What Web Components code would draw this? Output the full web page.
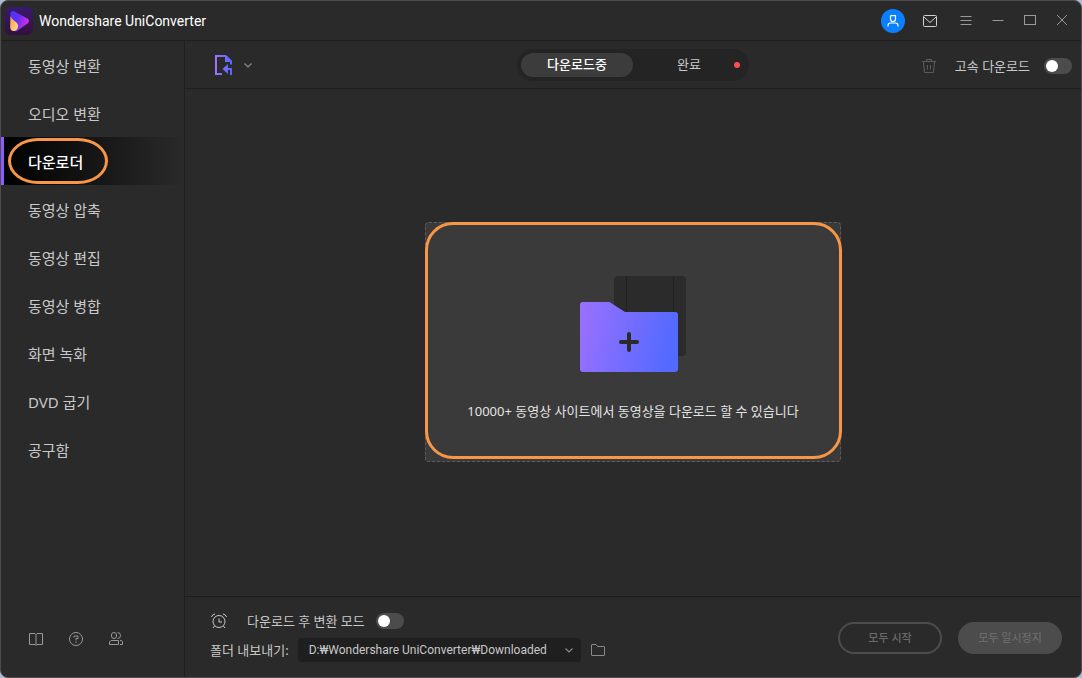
<!DOCTYPE html>
<html lang="ko">
<head>
<meta charset="utf-8">
<meta name="viewport" content="width=device-width, initial-scale=1">
<title>Wondershare UniConverter</title>
<style>
  html { height: 100%; background: #a9bcd3; }
  body {
    margin: 0; min-height: 100%; display: grid;
    font: 13px/20px "Noto Sans", "Noto Sans CJK KR", sans-serif;
    color: #c8c8c8;
    --bg: #2a2a2a; --line: #1e1e1e; --mark: #f79646; --accent: #8b5cff;
    --latin: Roboto, "Noto Sans CJK KR", sans-serif;
  }
</style>
</head>
<body>
<uc-window>
  <uc-titlebar slot="title">Wondershare UniConverter</uc-titlebar>
  <uc-sidebar slot="side">
    <uc-nav-item>동영상 변환</uc-nav-item>
    <uc-nav-item>오디오 변환</uc-nav-item>
    <uc-nav-item active>다운로더</uc-nav-item>
    <uc-nav-item>동영상 압축</uc-nav-item>
    <uc-nav-item>동영상 편집</uc-nav-item>
    <uc-nav-item>동영상 병합</uc-nav-item>
    <uc-nav-item>화면 녹화</uc-nav-item>
    <uc-nav-item>DVD 굽기</uc-nav-item>
    <uc-nav-item>공구함</uc-nav-item>
  </uc-sidebar>
  <uc-toolbar slot="tools"></uc-toolbar>
  <uc-dropzone slot="content">10000+ 동영상 사이트에서 동영상을 다운로드 할 수 있습니다</uc-dropzone>
  <uc-footer slot="footer"></uc-footer>
</uc-window>

<script>
const base = `
  *, *::before, *::after { box-sizing: border-box; }
  svg { display: block; fill: none; stroke: currentColor; }
  button { font: inherit; color: inherit; background: none; border: 0; padding: 0; margin: 0; cursor: pointer; }
`;

function define(name, css, html, setup) {
  const template = document.createElement('template');
  template.innerHTML = `<style>${base}${css}</style>${html}`;
  customElements.define(name, class extends HTMLElement {
    constructor() {
      super();
      this.attachShadow({ mode: 'open' }).append(template.content.cloneNode(true));
    }
    connectedCallback() { if (setup) setup(this, this.shadowRoot); }
  });
}

define('uc-window', `
  :host {
    display: grid; background: var(--bg);
    border: 1px solid #4c4c4c; border-radius: 8px; overflow: hidden;
    grid-template: "title title" 40px "side main" 1fr / 184px minmax(0, 1fr);
  }
  header { grid-area: title; border-bottom: 1px solid var(--line); display: grid; }
  aside { grid-area: side; border-right: 1px solid var(--line); display: grid; }
  main { grid-area: main; display: grid; grid-template-rows: 48px 1fr auto; }
  .tools { border-bottom: 1px solid var(--line); display: grid; }
  .content { display: grid; place-items: center; padding-bottom: 2px; }
  .footer { border-top: 1px solid var(--line); }
`, `
  <header><slot name="title"></slot></header>
  <aside><slot name="side"></slot></aside>
  <main>
    <div class="tools"><slot name="tools"></slot></div>
    <div class="content"><slot name="content"></slot></div>
    <div class="footer"><slot name="footer"></slot></div>
  </main>
`);

define('uc-titlebar', `
  :host { display: flex; align-items: center; padding: 0 3px 0 4px; }
  .logo { width: 28px; height: 28px; margin-right: 6px; stroke: none; }
  .name { flex: 1; font: 14px/20px var(--latin); color: #fff; }
  .controls { display: flex; align-items: center; color: #9a9a9a; }
  button { width: 32px; height: 32px; display: grid; place-items: center; }
  .user { width: 24px; height: 24px; border-radius: 12px; background: #0a80ff; color: #fff; margin-right: 9px; }
  .mail { color: #d0d0d0; margin-right: 4px; }
`, `
  <svg class="logo" viewBox="0 0 28 28" aria-hidden="true">
    <defs>
      <linearGradient id="tile" x1="0" y1="0" x2="0" y2="1"><stop stop-color="#3a1a6e"/><stop offset="1" stop-color="#32103a"/></linearGradient>
      <linearGradient id="play" x1="0" y1="0" x2="1" y2="0.4"><stop stop-color="#4a35ff"/><stop offset=".5" stop-color="#6230f6"/><stop offset="1" stop-color="#d32de6"/></linearGradient>
      <linearGradient id="drop" x1="0" y1="0" x2="1" y2="1"><stop stop-color="#ff9c4a"/><stop offset="1" stop-color="#ffdf8a"/></linearGradient>
    </defs>
    <rect width="28" height="28" rx="6" fill="url(#tile)"/>
    <path d="M5.500 6.500Q5.500 3 9 4.200L22.500 11.500Q25.500 14 22.500 16.500L12 24Q7 25 5.500 21Z" fill="url(#play)"/>
    <path d="M5.500 9Q6.500 12 11.500 15.500Q14 18 12.700 21Q11.500 24.500 8 24Q5.300 23.300 5.200 20Z" fill="url(#drop)"/>
  </svg>
  <span class="name"><slot></slot></span>
  <div class="controls">
    <button class="user" aria-label="계정"><svg width="14" height="14" viewBox="0 0 14 14" stroke-width="1.2"><path d="M5 1.700H9.500V5A2.500 2.500 0 0 1 4.500 5V2.200Z"/><path d="M2 12.500V11.500Q2 9 4.500 9H9.500Q12 9 12 11.500V12.500"/></svg></button>
    <button class="mail" aria-label="메시지"><svg width="16" height="16" viewBox="0 0 16 16"><rect x="1.500" y="2.500" width="13" height="11" rx="1"/><path d="M2 4L8 9.500L14 4"/></svg></button>
    <button aria-label="메뉴"><svg width="16" height="16" viewBox="0 0 16 16"><path d="M2.500 3.500H13.500M2.500 7.500H13.500M2.500 11.500H13.500"/></svg></button>
    <button aria-label="최소화"><svg width="16" height="16" viewBox="0 0 16 16"><path d="M2.500 7.500H13.500"/></svg></button>
    <button aria-label="최대화"><svg width="16" height="16" viewBox="0 0 16 16"><rect x="2.500" y="2.500" width="11" height="9"/></svg></button>
    <button aria-label="닫기"><svg width="16" height="16" viewBox="0 0 16 16"><path d="M3 2L13 12M13 2L3 12"/></svg></button>
  </div>
`);

define('uc-sidebar', `
  :host { display: flex; flex-direction: column; justify-content: space-between; }
  nav { display: flex; flex-direction: column; }
  .links { display: flex; gap: 16px; padding: 0 23px 26px; color: #999; }
  button { width: 24px; height: 24px; display: grid; place-items: center; }
`, `
  <nav><slot></slot></nav>
  <div class="links">
    <button aria-label="사용 설명서"><svg width="16" height="16" viewBox="0 0 16 16"><path d="M8 3.500L7 2.500H1.500V13.500H7L8 14.500L9 13.500H14.500V2.500H9ZM8 3.500V14"/></svg></button>
    <button aria-label="도움말"><svg width="16" height="16" viewBox="0 0 16 16"><circle cx="8" cy="8" r="6.500"/><path d="M6 6.500V5H10V7.500H8V9.500M8 10.500V12"/></svg></button>
    <button aria-label="커뮤니티"><svg width="16" height="16" viewBox="0 0 16 16"><rect x="3.500" y="1.500" width="5" height="6" rx="2.500"/><path d="M9.500 1.500Q12.500 1.500 12.500 4.500T9.500 7.500M1.500 13.500V11L3 9.500H10.500V13.500ZM12 9.500H13.500L14.500 11V13.500H12"/></svg></button>
  </div>
`);

define('uc-nav-item', `
  :host { display: block; }
  a { position: relative; display: flex; align-items: center; height: 48px; padding: 2px 0 0 27px;
      font-size: 15px; line-height: 24px; color: inherit; text-decoration: none; }
  :host([active]) a { color: #fff; font-weight: 500; background: linear-gradient(90deg, #000, #2a2a2a); }
  :host([active]) a::before { content: ""; position: absolute; inset: 0 auto 0 0; width: 3px; background: var(--accent); }
  :host([active]) a::after { content: ""; position: absolute; left: 7px; top: 1px; width: 100px; height: 46px;
      border: 3px solid var(--mark); border-radius: 30px / 23px; }
`, `<a href="#"><slot></slot></a>`, (host, root) => {
  if (host.hasAttribute('active')) root.querySelector('a').setAttribute('aria-current', 'page');
});

const switchCss = `
  input[type=checkbox] { appearance: none; margin: 0; width: 28px; height: 16px; border-radius: 8px; background: #4c4c4c;
    display: flex; align-items: center; padding: 2px; flex: none; }
  input[type=checkbox]::before { content: ""; width: 12px; height: 12px; border-radius: 6px; background: #fff; }
  input[type=checkbox]:checked { background: var(--accent); justify-content: flex-end; }
`;

define('uc-toolbar', `${switchCss}
  :host { display: grid; grid-template-columns: 1fr auto 1fr; align-items: center; padding: 0 9px 0 29px; }
  .add { display: flex; align-items: center; gap: 9px; justify-self: start; color: #8a8a8a; }
  .tabs { display: flex; align-items: center; height: 32px; padding: 4px; border-radius: 16px; background: #242424; margin-right: 20px; }
  .tabs button { position: relative; width: 112px; height: 24px; border-radius: 12px; line-height: 20px; padding-bottom: 2px; }
  .tabs button[aria-selected=true] { background: #3c3c3c; color: #fff; font-weight: 500; }
  .dot { position: absolute; right: 5px; top: 9px; width: 6px; height: 6px; border-radius: 3px; background: #ff4d4f; }
  .right { display: flex; align-items: center; justify-self: end; padding-top: 2px; }
  .trash { color: #5c5c5c; margin-right: 18px; }
  label { margin-right: 14px; }
`, `
  <button class="add" aria-label="URL 붙여넣기">
    <svg width="20" height="24" viewBox="0 0 20 24" stroke-width="2">
      <defs><linearGradient id="g" gradientUnits="userSpaceOnUse" x1="1" y1="0" x2="18" y2="0"><stop stop-color="#a070ff"/><stop offset="1" stop-color="#5468ff"/></linearGradient></defs>
      <path stroke="url(#g)" d="M8 21H2V3H11.500L17 8.500V11.500"/>
      <path stroke="none" fill="url(#g)" d="M11 3H13L18 8V9H11Z"/>
      <path stroke="url(#g)" d="M10 16H17V22"/><path stroke="none" fill="url(#g)" d="M8.500 16L14 11V21Z"/>
    </svg>
    <svg width="10" height="10" viewBox="0 0 10 10" stroke-width="1.200"><path d="M1.500 3.500L5 7L8.500 3.500"/></svg>
  </button>
  <div class="tabs" role="tablist">
    <button role="tab" aria-selected="true">다운로드중</button>
    <button role="tab" aria-selected="false">완료<span class="dot"></span></button>
  </div>
  <div class="right">
    <button class="trash" aria-label="삭제"><svg width="16" height="16" viewBox="0 0 16 16"><path d="M1 3.500H15M5.500 3V1.500H10.500V3M2.500 4L3.500 14.500H12.500L13.500 4M6.500 7V11.500M9.500 7V11.500"/></svg></button>
    <label for="fast">고속 다운로드</label><input id="fast" type="checkbox" role="switch">
  </div>
`);

define('uc-dropzone', `
  :host { display: block; width: 416px; max-width: 100%; }
  svg { stroke: none; }
  button { position: relative; width: 100%; min-height: 240px; display: flex; flex-direction: column; align-items: center;
    padding: 53px 16px 39px; gap: 29px; background: #3a3a3a; border: 1px dashed #5c5c5c; border-radius: 4px; color: #e4e4e4; }
  button::after { content: ""; position: absolute; inset: -1px -2px 2px -1px; border: 3px solid var(--mark); border-radius: 28px; }
`, `
  <button>
    <svg width="106" height="96" viewBox="0 0 106 96" aria-hidden="true">
      <defs><linearGradient id="f" x1="0" y1="0" x2="1" y2="0.150"><stop stop-color="#9b70ff"/><stop offset="1" stop-color="#546aff"/></linearGradient></defs>
      <rect x="34" width="72" height="80" rx="4" fill="#2b2b2b"/>
      <path d="M46.500 0V80M93.500 0V80" stroke="#212121"/>
      <path d="M3 26H29Q30 26 31 27L45 36H95Q98 36 98 39V93Q98 96 95 96H3Q0 96 0 93V29Q0 26 3 26Z" fill="url(#f)"/>
      <path d="M49 58V74M41 66H57" stroke="#2a2a2a" stroke-width="4" stroke-linecap="round"/>
    </svg>
    <span><slot></slot></span>
  </button>
`);

define('uc-footer', `${switchCss}
  :host { display: flex; align-items: center; justify-content: space-between; padding: 12px 19px 15px 25px; }
  .row { display: flex; align-items: center; }
  .mode { height: 24px; }
  .mode svg { margin-right: 19px; }
  .mode label { margin-right: 11px; }
  .path { margin-top: 5px; }
  .path label { margin-right: 9px; }
  .field { display: grid; align-items: center; width: 283px; margin-right: 9px; color: #8a8a8a; }
  .field > * { grid-area: 1 / 1; }
  .field svg { justify-self: end; margin-right: 7px; pointer-events: none; }
  .open { color: #8a8a8a; }
  select { appearance: none; width: 100%; height: 24px; padding: 0 24px 0 11px; border: 0; border-radius: 4px;
    background: #1f1f1f; color: #c8c8c8; font: 12px/20px var(--latin); }
  .actions { display: flex; gap: 16px; padding-top: 4px; }
  .actions button { width: 104px; height: 32px; border-radius: 16px; border: 2px solid #4c4c4c; font-size: 11px; font-weight: 500; color: #6a6a6a; }
  .actions .fill { background: #4c4c4c; }
`, `
  <div>
    <div class="row mode">
      <svg width="18" height="18" viewBox="0 0 18 18"><circle cx="9" cy="9.500" r="6"/><path d="M9 6.500V10H12M1.500 5Q2 2.500 5 2M16.500 5Q16 2.500 13 2M4.500 14L3 16M13.500 14L15 16"/></svg>
      <label for="convert">다운로드 후 변환 모드</label><input id="convert" type="checkbox" role="switch">
    </div>
    <div class="row path">
      <label for="folder">폴더 내보내기:</label>
      <span class="field">
        <select id="folder"><option>D:₩Wondershare UniConverter₩Downloaded</option></select>
        <svg width="10" height="10" viewBox="0 0 10 10" stroke-width="1.200"><path d="M1.500 3.500L5 7L8.500 3.500"/></svg>
      </span>
      <button class="open" aria-label="폴더 열기"><svg width="16" height="16" viewBox="0 0 16 16"><path d="M1.500 3Q1.500 2.500 2 2.500H6L7.500 4.500H14Q14.500 4.500 14.500 5V13Q14.500 13.500 14 13.500H2Q1.500 13.500 1.500 13Z"/></svg></button>
    </div>
  </div>
  <div class="actions">
    <button disabled>모두 시작</button>
    <button class="fill" disabled>모두 일시정지</button>
  </div>
`);
</script>
</body>
</html>
